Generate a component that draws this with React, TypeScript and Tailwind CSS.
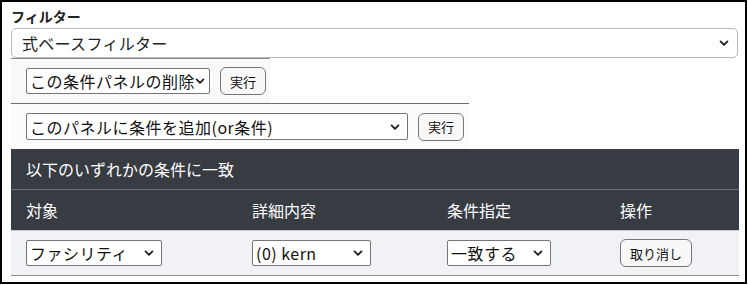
const jp = "font-['Noto_Sans_CJK_JP','Noto_Sans',sans-serif]";

function Chevron({ className = "" }: { className?: string }) {
  return (
    <svg viewBox="0 0 16 16" className={`w-[10px] h-[10px] shrink-0 ${className}`}>
      <path d="M2.5 5.5 8 11l5.5-5.5" fill="none" stroke="#222" strokeWidth="3" strokeLinecap="round" strokeLinejoin="round" />
    </svg>
  );
}

function NativeSelect({ label, width, height = "h-[26px]" }: { label: string; width: string; height?: string }) {
  return (
    <div
      className={`${width} ${height} flex items-center justify-between border border-[#767676] rounded-[2px] bg-white pl-[3px] pr-[7px] text-[16px] tracking-[0.5px] text-[#111] leading-none`}
    >
      <span className="whitespace-nowrap">{label}</span>
      <Chevron />
    </div>
  );
}

function SmallButton({ label, className = "" }: { label: string; className?: string }) {
  return (
    <div
      className={`h-[28px] flex items-center justify-center border border-[#767676] rounded-[6px] bg-[#f8f8f8] text-[13px] text-[#111] leading-none ${className}`}
    >
      {label}
    </div>
  );
}

export default function App() {
  return (
    <div className={`w-[747px] h-[284px] border-2 border-black bg-white pl-[9px] pr-[7px] pt-[5px] ${jp}`}>
      <div className="h-[21px] text-[14px] font-bold text-[#222] leading-[18px]">フィルター</div>

      <div className="h-[30px] flex items-center justify-between border border-[#b8b8b8] rounded-[5px] pl-[10px] pr-[8px] text-[16px] tracking-[0.3px] text-[#222]">
        <span>式ベースフィルター</span>
        <Chevron />
      </div>

      <div className="w-[259px] h-[45px] border-t border-[#8a8a8a] bg-[#f9f9f9] flex items-center gap-[10px] pl-[15px]">
        <NativeSelect label="この条件パネルの削除" width="w-[184px]" />
        <SmallButton label="実行" className="w-[46px]" />
      </div>

      <div className="w-[458px] h-[46px] border-t border-[#6e6e6e] bg-[#fbfbfb] flex items-center gap-[10px] pl-[15px]">
        <NativeSelect label="このパネルに条件を追加(or条件)" width="w-[382px]" height="h-[27px]" />
        <SmallButton label="実行" className="w-[46px]" />
      </div>

      <div className="w-[728px]">
        <div className="h-[41px] bg-[#373b42] border-b border-[#6c7075] flex items-center pl-[15px] text-[16px] text-white">
          以下のいずれかの条件に一致
        </div>
        <div className="h-[41px] bg-[#373b42] border-b border-[#c9ccd0] grid grid-cols-[226px_195px_173px_134px] items-center text-[16px] text-white">
          <div className="pl-[15px]">対象</div>
          <div className="pl-[15px]">詳細内容</div>
          <div className="pl-[15px]">条件指定</div>
          <div className="pl-[15px]">操作</div>
        </div>
        <div className="h-[45px] bg-[#f1f2f6] border-b border-[#8c8c8c] grid grid-cols-[226px_195px_173px_134px] items-center">
          <div className="pl-[15px]">
            <NativeSelect label="ファシリティ" width="w-[136px]" />
          </div>
          <div className="pl-[15px]">
            <NativeSelect label="(0) kern" width="w-[119px]" />
          </div>
          <div className="pl-[15px]">
            <NativeSelect label="一致する" width="w-[104px]" />
          </div>
          <div className="pl-[15px]">
            <SmallButton label="取り消し" className="w-[72px]" />
          </div>
        </div>
      </div>
    </div>
  );
}
